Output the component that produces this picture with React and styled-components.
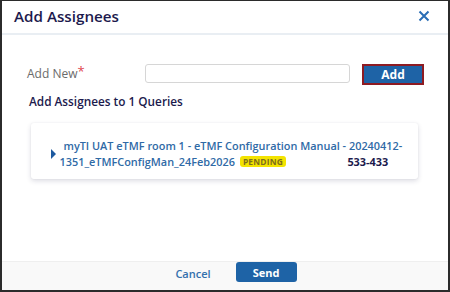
import React from "react";
import styled, { createGlobalStyle } from "styled-components";

const Global = createGlobalStyle`
  html, body { margin: 0; padding: 0; background: #fff; }
  body { font-family: "Open Sans", "Noto Sans", sans-serif; }
  * { box-sizing: border-box; }
`;

const Dialog = styled.div`
  width: 450px;
  height: 292px;
  border: 1px solid #2b2b2b;
  border-left-width: 2px;
  border-right-width: 2px;
  border-bottom-width: 2px;
  display: flex;
  flex-direction: column;
  background: #fff;
  overflow: hidden;
`;

const Header = styled.div`
  height: 34px;
  flex: none;
  display: flex;
  align-items: center;
  justify-content: space-between;
  padding: 0 18px 2px 12px;
  border-bottom: 2px solid #e9eef3;
`;

const Title = styled.h1`
  margin: 0;
  font-size: 15.2px;
  font-weight: 600;
  color: #1c1a4d;
`;

const Close = styled.button`
  border: 0;
  background: none;
  padding: 0;
  width: 12px;
  height: 12px;
  display: flex;
  cursor: pointer;
`;

const Body = styled.div`
  flex: 1;
  padding: 28px 24px 0 25px;
  display: flex;
  flex-direction: column;
`;

const FormRow = styled.div`
  display: flex;
  align-items: center;
  height: 22px;
`;

const Label = styled.label`
  width: 118px;
  font-size: 12px;
  color: #6b6b6b;
  margin-top: -4px;
`;

const Req = styled.span`
  color: #e0484f;
  font-size: 13px;
  vertical-align: 2px;
`;

const Input = styled.input`
  width: 205px;
  height: 19px;
  border: 1px solid #d6d6d6;
  border-radius: 3px;
  margin-top: -2px;
  background: #fff;
`;

const AddButton = styled.button`
  margin-left: 12px;
  width: 62px;
  height: 21px;
  background: #1e63a6;
  border: 2px solid #8e1b22;
  color: #fff;
  font-family: inherit;
  font-weight: 700;
  font-size: 12px;
  padding: 0;
`;

const SubTitle = styled.h2`
  margin: 8px 0 0 2px;
  font-size: 11.8px;
  font-weight: 600;
  color: #1c1a4d;
`;

const Card = styled.div`
  margin: 14px 6px 0 4px;
  height: 56px;
  background: #fff;
  border-radius: 3px;
  box-shadow: 0 2px 5px rgba(40, 40, 80, 0.16), 0 0 2px rgba(0, 0, 0, 0.06);
  padding: 5px 16px 0 20px;
  display: flex;
  align-items: center;
`;

const Caret = styled.span`
  width: 0;
  height: 0;
  border-top: 5px solid transparent;
  border-bottom: 5px solid transparent;
  border-left: 5.5px solid #1d5aa0;
  margin-right: 3.5px;
  flex: none;
`;

const QueryText = styled.div`
  font-size: 10.9px;
  font-weight: 600;
  line-height: 16px;
  color: #2f6aa6;
  flex: 1;
`;

const Line = styled.div`
  display: flex;
  align-items: center;
  padding-left: ${p => p.$indent || 0}px;
  white-space: nowrap;
`;

const Badge = styled.span`
  background: #f3e300;
  color: #7d6d1e;
  font-size: 8.4px;
  font-weight: 700;
  border-radius: 3px;
  padding: 0 3px;
  margin-left: 5px;
  line-height: 11px;
  letter-spacing: 0.2px;
`;

const Code = styled.span`
  margin-left: auto;
  margin-right: 14px;
  color: #1c1a4d;
  font-weight: 700;
`;

const Footer = styled.div`
  height: 29px;
  flex: none;
  background: #f9f9f9;
  border-top: 1px solid #efefef;
  display: flex;
  justify-content: center;
  align-items: flex-start;
  padding-left: 22px;
  gap: 25px;
`;

const Cancel = styled.button`
  border: 0;
  background: none;
  color: #3370ad;
  font-family: inherit;
  font-weight: 600;
  font-size: 11px;
  padding: 0;
  height: 20px;
  margin-top: 1px;
`;

const Send = styled.button`
  width: 61px;
  height: 20px;
  background: #1e63a6;
  border: 0;
  border-radius: 3px;
  color: #fff;
  font-family: inherit;
  font-weight: 700;
  font-size: 11px;
  padding: 0;
`;

export default function App() {
  return (
    <>
      <Global />
      <Dialog>
        <Header>
          <Title>Add Assignees</Title>
          <Close aria-label="Close">
            <svg width="12" height="12" viewBox="0 0 12 12">
              <path d="M1.5 1.5 L10.5 10.5 M10.5 1.5 L1.5 10.5" stroke="#2a6db5" strokeWidth="2" />
            </svg>
          </Close>
        </Header>
        <Body>
          <FormRow>
            <Label>
              Add New<Req>*</Req>
            </Label>
            <Input />
            <AddButton>Add</AddButton>
          </FormRow>
          <SubTitle>Add Assignees to 1 Queries</SubTitle>
          <Card>
            <Caret />
            <QueryText>
              <Line $indent={4}>myTI UAT eTMF room 1 - eTMF Configuration Manual - 20240412-</Line>
              <Line>
                1351_eTMFConfigMan_24Feb2026
                <Badge>PENDING</Badge>
                <Code>533-433</Code>
              </Line>
            </QueryText>
          </Card>
        </Body>
        <Footer>
          <Cancel>Cancel</Cancel>
          <Send>Send</Send>
        </Footer>
      </Dialog>
    </>
  );
}
